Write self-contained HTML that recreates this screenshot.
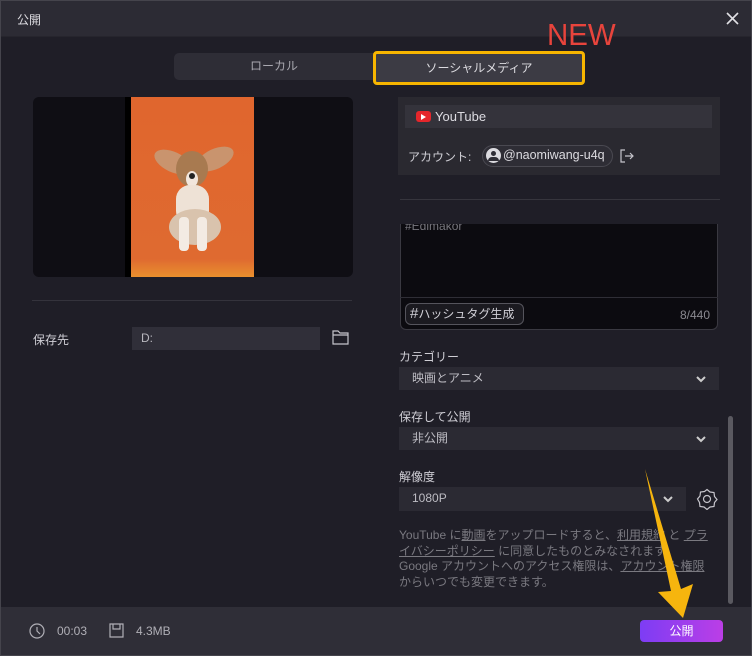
<!DOCTYPE html>
<html><head><meta charset="utf-8">
<style>
*{box-sizing:border-box;margin:0;padding:0}
body{width:752px;height:656px;background:#1f1e27;font-family:"Liberation Sans","Noto Sans CJK JP",sans-serif;color:#c9c8cf;position:relative;overflow:hidden;font-size:12px}
.a{position:absolute}
.sel{position:absolute;background:#2b2a33;color:#bdbcc3;font-size:12px;padding-left:13px;line-height:23px}
.chev{position:absolute;right:12px;top:6px;width:12px;height:12px}
.lbl{position:absolute;font-size:12px;color:#cfced5}
u{text-decoration:underline}
</style></head><body>
<div class="a" style="left:0;top:0;width:752px;height:37px;background:#2c2b34;border-bottom:1px solid #26252d"></div>
<div class="a" style="left:17px;top:11px;font-size:12px;color:#dcdbe0">公開</div>
<svg class="a" style="left:726px;top:12px" width="13" height="13"><path d="M1 1L12 12M12 1L1 12" stroke="#e0e0e4" stroke-width="1.6"/></svg>
<div class="a" style="left:547px;top:17px;font-size:31px;color:#e8443c;transform:scaleX(0.95);transform-origin:left">NEW</div>
<div class="a" style="left:174px;top:53px;width:200px;height:27px;background:#2e2d36;border-radius:5px 0 0 5px;text-align:center;line-height:27px;color:#a9a8b0;font-size:12px">ローカル</div>
<div class="a" style="left:373px;top:51px;width:212px;height:34px;border:3px solid #f7b500;border-radius:4px;background:#3c3b44;text-align:center;line-height:28px;color:#dcdbe0;font-size:12px">ソーシャルメディア</div>

<div class="a" style="left:33px;top:97px;width:320px;height:180px;background:#0f0e14;border-radius:6px"></div>
<div class="a" style="left:125px;top:97px;width:6px;height:180px;background:#000"></div>
<div class="a" style="left:131px;top:97px;width:123px;height:180px;background:linear-gradient(#e0662e,#df6a30 90%,#e9902e)">
<svg width="123" height="180"><g>
<ellipse cx="42" cy="65" rx="20" ry="10" fill="#c9946e" transform="rotate(25 42 65)"/>
<ellipse cx="84" cy="62" rx="20" ry="10" fill="#c9946e" transform="rotate(-25 84 62)"/>
<ellipse cx="61" cy="72" rx="16" ry="18" fill="#a87a50"/>
<ellipse cx="61" cy="82" rx="6" ry="8" fill="#f1e6dc"/>
<rect x="45" y="88" width="33" height="40" rx="14" fill="#eee2d6"/>
<ellipse cx="64" cy="130" rx="26" ry="18" fill="#d9c3ad"/>
<rect x="48" y="120" width="10" height="34" rx="4" fill="#f3ebe3"/>
<rect x="66" y="120" width="10" height="34" rx="4" fill="#f3ebe3"/>
<circle cx="61" cy="79" r="3" fill="#222"/>
</g></svg></div>
<div class="a" style="left:32px;top:300px;width:320px;height:1px;background:#34333c"></div>
<div class="lbl" style="left:33px;top:331px">保存先</div>
<div class="a" style="left:132px;top:327px;width:188px;height:23px;background:#302f39;color:#b8b7be;padding-left:9px;line-height:23px;font-size:12px">D:</div>
<svg class="a" style="left:332px;top:329px" width="17" height="16"><path d="M1 2h5l2 2h8v11H1z M1 6h15" fill="none" stroke="#c5c4cb" stroke-width="1.2"/></svg>

<div class="a" style="left:398px;top:97px;width:322px;height:78px;background:#2a2930"></div>
<div class="a" style="left:405px;top:105px;width:307px;height:23px;background:#34333b"></div>
<div class="a" style="left:416px;top:111px;width:15px;height:11px;background:#e5262b;border-radius:3px"></div>
<svg class="a" style="left:421px;top:114px" width="6" height="6"><path d="M0 0L5 3L0 6z" fill="#fff"/></svg>
<div class="a" style="left:435px;top:109px;font-size:13px;color:#dddce2">YouTube</div>
<div class="a" style="left:408px;top:148px;font-size:12px;color:#cfced5">アカウント:</div>
<div class="a" style="left:482px;top:145px;width:131px;height:22px;border:1px solid #4a4951;border-radius:11px;background:#2e2d35"></div>
<div class="a" style="left:486px;top:148px;width:15px;height:15px;border-radius:50%;background:#dcdbe0"></div>
<div class="a" style="left:491px;top:151px;width:5px;height:5px;border-radius:50%;background:#2e2d35"></div>
<div class="a" style="left:488px;top:157px;width:11px;height:4px;border-radius:4px 4px 0 0;background:#2e2d35"></div>
<div class="a" style="left:503px;top:148px;font-size:12.5px;color:#dcdbe0">@naomiwang-u4q</div>
<svg class="a" style="left:620px;top:149px" width="14" height="14"><path d="M5 1H1v12h4M5 7h8M10 4l3 3-3 3" fill="none" stroke="#c5c4cb" stroke-width="1.2"/></svg>
<div class="a" style="left:400px;top:199px;width:320px;height:1px;background:#36353d"></div>
<div class="a" style="left:400px;top:224px;width:318px;height:106px;background:#0c0b10;border:1px solid #3a3941;border-top:none;border-radius:0 0 6px 6px"></div>
<div class="a" style="left:405px;top:218px;font-size:12px;color:#77767d;height:12px;overflow:hidden;top:224px;line-height:4px">#Edimakor</div>
<div class="a" style="left:400px;top:297px;width:318px;height:1px;background:#2f2e36"></div>
<div class="a" style="left:405px;top:303px;width:119px;height:22px;border:1px solid #55545c;border-radius:6px;background:#1b1a20;color:#d0cfd6;font-size:12px;line-height:20px;padding-left:4px"><b style="font-size:15px;font-weight:normal">#</b>ハッシュタグ生成</div>
<div class="a" style="left:680px;top:308px;font-size:12px;color:#8a8990">8/440</div>

<div class="lbl" style="left:399px;top:348px">カテゴリー</div>
<div class="sel" style="left:399px;top:367px;width:320px">映画とアニメ<svg class="chev" viewBox="0 0 12 12"><path d="M2 4l4 4 4-4" fill="none" stroke="#ccc" stroke-width="2"/></svg></div>
<div class="lbl" style="left:399px;top:408px">保存して公開</div>
<div class="sel" style="left:399px;top:427px;width:320px">非公開<svg class="chev" viewBox="0 0 12 12"><path d="M2 4l4 4 4-4" fill="none" stroke="#ccc" stroke-width="2"/></svg></div>
<div class="lbl" style="left:399px;top:468px">解像度</div>
<div class="sel" style="left:399px;top:487px;width:287px;height:24px">1080P<svg class="chev" viewBox="0 0 12 12"><path d="M2 4l4 4 4-4" fill="none" stroke="#ccc" stroke-width="2"/></svg></div>
<svg class="a" style="left:696px;top:488px" width="22" height="22" viewBox="0 0 22 22"><path d="M11 1.5l3 2.5 4 .5.5 4 2.5 3-2.5 3-.5 4-4 .5-3 2.5-3-2.5-4-.5-.5-4L1.5 11 4 8l.5-4 4-.5z" fill="none" stroke="#c5c4cb" stroke-width="1.2"/><circle cx="11" cy="11" r="3.5" fill="none" stroke="#c5c4cb" stroke-width="1.2"/></svg>
<div class="a" style="left:399px;top:528px;width:330px;font-size:12px;line-height:15.5px;color:#7a7980;white-space:nowrap">YouTube に<u>動画</u>をアップロードすると、<u>利用規約</u> と <u>プラ</u><br><u>イバシーポリシー</u> に同意したものとみなされます。<br>Google アカウントへのアクセス権限は、<u>アカウント権限</u><br>からいつでも変更できます。</div>
<div class="a" style="left:728px;top:416px;width:5px;height:188px;background:#5a5960;border-radius:3px"></div>

<div class="a" style="left:0;top:607px;width:752px;height:49px;background:#2f2e37"></div>
<svg class="a" style="left:29px;top:623px" width="16" height="16"><circle cx="8" cy="8" r="7" fill="none" stroke="#b0afb6" stroke-width="1.2"/><path d="M8 4v4l3 3" fill="none" stroke="#b0afb6" stroke-width="1.2"/></svg>
<div class="a" style="left:57px;top:624px;font-size:12px;color:#b0afb6">00:03</div>
<svg class="a" style="left:109px;top:623px" width="15" height="15"><path d="M1 1h13v13H1z M4 1v5h7V1" fill="none" stroke="#b0afb6" stroke-width="1.2"/></svg>
<div class="a" style="left:136px;top:624px;font-size:12px;color:#b0afb6">4.3MB</div>
<div class="a" style="left:640px;top:620px;width:83px;height:22px;border-radius:4px;background:linear-gradient(90deg,#7d3df4,#bb3ee6);color:#fff;text-align:center;line-height:22px;font-size:12px">公開</div>
<svg class="a" style="left:0;top:0" width="752" height="656"><path d="M645 469L671 591 658 592 683 618 693 584 681 589Z" fill="#f6b50e"/></svg>
<div class="a" style="left:0;top:0;width:752px;height:656px;border:1px solid #45444c;pointer-events:none"></div>
</body></html>
